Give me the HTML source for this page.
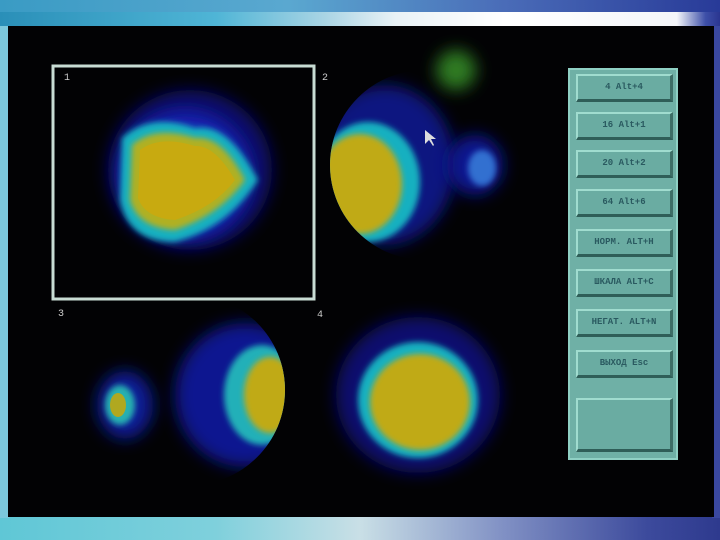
<html><head><style>
body{margin:0;width:720px;height:540px;overflow:hidden;background:#000;font-family:"Liberation Mono",monospace}
.top{position:absolute;left:0;top:0;width:720px;height:30px;background:linear-gradient(90deg,#2a8fb8,#4fb5d6 30%,#a9d4e4 45%,#e9f2f6 55%,#fff 70%,#f4f6fa 94%,#3d4fa8 98%,#2a3590)}
.top2{position:absolute;left:0;top:0;width:720px;height:12px;background:linear-gradient(90deg,#3a9bc4,#5aa8d0 40%,#4a6cb8 70%,#283a98)}
.bot{position:absolute;left:0;top:516px;width:720px;height:24px;background:linear-gradient(90deg,#5fc7d6,#7fd0dc 30%,#c9dfe6 50%,#8090c4 70%,#3c4a9c 90%,#2e3a8e)}
.side{position:absolute;top:26px;height:492px;width:9px}
.scr{position:absolute;left:8px;top:26px;width:706px;height:491px;background:#020204}
.panel{position:absolute;left:568px;top:68px;width:110px;height:392px;background:#6fb0a6;border:2px solid #8fd0c4;box-sizing:border-box}
.b{position:absolute;left:6px;width:97px;height:28px;background:#6aaca2;border-top:2px solid #a0dccf;border-left:2px solid #a0dccf;border-bottom:3px solid #2f5e58;border-right:3px solid #3d6e66;box-sizing:border-box;font-size:9px;font-weight:bold;color:#2a5a60;text-align:center;line-height:22px;white-space:nowrap;overflow:hidden}
</style></head><body>
<div class="top"></div><div class="top2"></div><div class="bot"></div>
<div class="side" style="left:0;background:#7cc8dc"></div>
<div class="side" style="left:712px;background:#3a48a0"></div>
<div class="scr"></div>
<svg width="720" height="540" style="position:absolute;left:0;top:0">
<defs>
<filter id="f" x="-50%" y="-50%" width="200%" height="200%"><feGaussianBlur stdDeviation="8"/></filter>
<filter id="g" x="-50%" y="-50%" width="200%" height="200%"><feGaussianBlur stdDeviation="3"/></filter>
<clipPath id="c2"><circle cx="425" cy="165" r="95"/></clipPath>
<clipPath id="c3"><circle cx="190" cy="390" r="95"/></clipPath>
</defs>
<rect x="53" y="66" width="261" height="233" fill="none" stroke="#c8dcd4" stroke-width="3"/>
<text x="64" y="80" fill="#ccc" font-size="10">1</text>
<text x="322" y="80" fill="#ccc" font-size="10">2</text>
<text x="58" y="316" fill="#ccc" font-size="10">3</text>
<text x="317" y="317" fill="#ccc" font-size="10">4</text>
<circle cx="456" cy="70" r="20" fill="#2f7a20" filter="url(#f)"/>
<g>
<ellipse cx="190" cy="170" rx="82" ry="80" fill="#08106a" filter="url(#f)"/>
<ellipse cx="185" cy="175" rx="66" ry="64" fill="#1420b0" filter="url(#f)"/>
<path d="M122 138 Q150 112 195 128 Q228 122 258 180 Q228 228 175 242 Q128 242 120 200 Z" fill="#18b0c0" filter="url(#g)"/>
<path d="M132 145 Q155 125 195 138 Q222 135 245 180 Q220 215 175 230 Q138 228 130 200 Z" fill="#b0b020" filter="url(#g)"/>
<path d="M140 150 Q160 135 195 146 Q215 145 235 180 Q215 207 175 220 Q145 218 138 198 Z" fill="#c8aa10"/>
</g>
<g clip-path="url(#c2)">
<ellipse cx="385" cy="165" rx="70" ry="80" fill="#0c1480" filter="url(#f)"/>
<ellipse cx="368" cy="182" rx="52" ry="60" fill="#18b0c0" filter="url(#g)"/>
<ellipse cx="360" cy="184" rx="42" ry="50" fill="#c0aa18" filter="url(#g)"/>
</g>
<ellipse cx="475" cy="165" rx="28" ry="30" fill="#0c1890" filter="url(#f)"/>
<ellipse cx="482" cy="168" rx="14" ry="18" fill="#3070d0" filter="url(#g)"/>
<ellipse cx="125" cy="405" rx="28" ry="34" fill="#0c1a98" filter="url(#f)"/>
<ellipse cx="120" cy="405" rx="15" ry="20" fill="#28b0b0" filter="url(#g)"/>
<ellipse cx="118" cy="405" rx="8" ry="12" fill="#b0a820"/>
<g clip-path="url(#c3)">
<ellipse cx="245" cy="395" rx="70" ry="72" fill="#0c1490" filter="url(#f)"/>
<ellipse cx="262" cy="395" rx="38" ry="50" fill="#20b0b8" filter="url(#g)"/>
<ellipse cx="270" cy="395" rx="26" ry="38" fill="#c0aa18" filter="url(#g)"/>
</g>
<ellipse cx="418" cy="395" rx="82" ry="78" fill="#08106e" filter="url(#f)"/>
<ellipse cx="418" cy="400" rx="60" ry="58" fill="#18b0c0" filter="url(#g)"/>
<ellipse cx="420" cy="402" rx="50" ry="48" fill="#c0aa18" filter="url(#g)"/>
<polygon points="425,130 425,144 429,140 433,146 434,145 431,139 436,139" fill="#ddd"/>
</svg>
<div class="panel">
<div class="b" style="top:4px">4 Alt+4</div>
<div class="b" style="top:42px">16 Alt+1</div>
<div class="b" style="top:80px">20 Alt+2</div>
<div class="b" style="top:119px">64 Alt+6</div>
<div class="b" style="top:159px">НОРМ. ALT+H</div>
<div class="b" style="top:199px">ШКАЛА ALT+C</div>
<div class="b" style="top:239px">НЕГАТ. ALT+N</div>
<div class="b" style="top:280px">ВЫХОД Esc</div>
<div class="b" style="top:328px;height:54px"></div>
</div>
</body></html>
